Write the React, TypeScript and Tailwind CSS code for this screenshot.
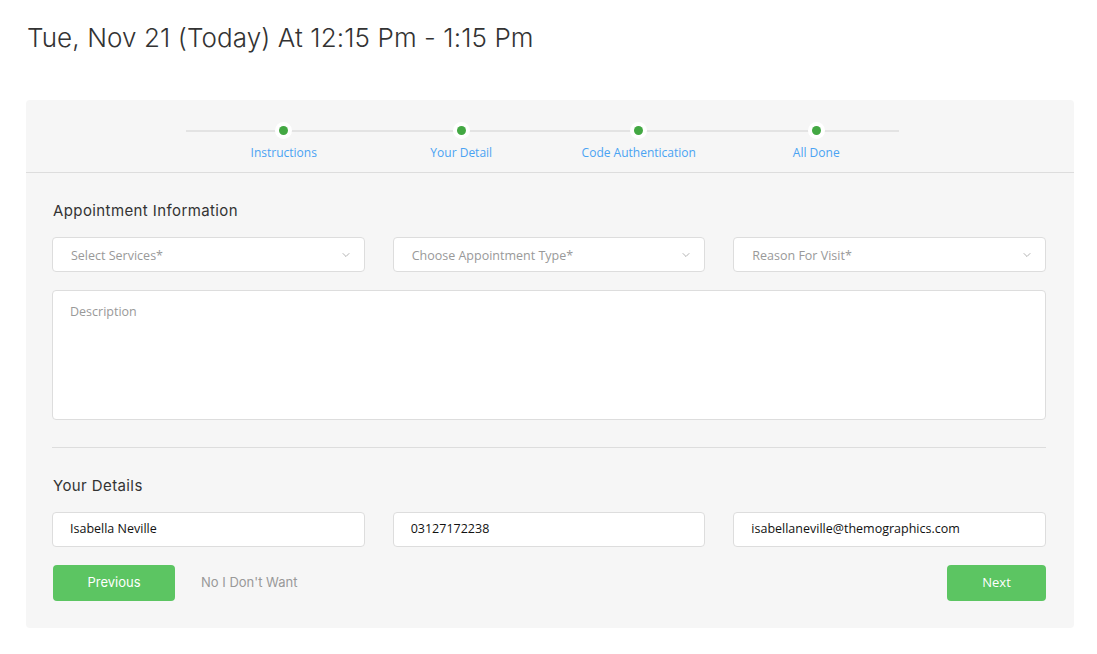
import { ChevronDown } from 'lucide-react';

const steps = ['Instructions', 'Your Detail', 'Code Authentication', 'All Done'];

const selects = ['Select Services*', 'Choose Appointment Type*', 'Reason For Visit*'];

const details = ['Isabella Neville', '03127172238', 'isabellaneville@themographics.com'];

export default function App() {
  return (
    <div className="min-h-[654px] bg-white px-[26px] pt-[22px] font-['Open_Sans',sans-serif]">
      <h1 className="text-[26px] font-light leading-[32px] text-[#333] font-['Inter',sans-serif] tracking-[0.1px] pl-px">
        Tue, Nov 21 (Today) At 12:15 Pm - 1:15 Pm
      </h1>

      <div className="mt-[46px] w-[1048px] rounded-[4px] bg-[#f6f6f6]">
        {/* Stepper */}
        <div className="border-b border-[#dddddd] pt-[22px] pb-[11px]">
          <div className="relative mx-auto flex w-[710px]">
            <div className="absolute left-[-9px] top-[8px] h-[2px] w-[713px] bg-[#e3e3e3]" />
            {steps.map((s) => (
              <div key={s} className="relative flex w-[177.5px] flex-col items-center">
                <div className="flex h-[17px] w-[17px] items-center justify-center rounded-full bg-white">
                  <div className="h-[9px] w-[9px] rounded-full bg-[#43a843]" />
                </div>
                <span className="mt-[6px] text-[12px] leading-[16px] text-[#4aa3f3]">{s}</span>
              </div>
            ))}
          </div>
        </div>

        <div className="pl-[26px] pr-[28px] pt-[28px] pb-[27px]">
          <h2 className="text-[15px] font-normal leading-[20px] text-[#333] font-['Inter',sans-serif] tracking-[0.4px] pl-px">
            Appointment Information
          </h2>

          <div className="mt-[16px] grid grid-cols-3 gap-[28px]">
            {selects.map((s) => (
              <div
                key={s}
                className="flex h-[35px] items-center justify-between rounded-[4px] border border-[#dddddd] bg-white pl-[18px] pr-[12px]"
              >
                <span className="pt-[3px] text-[12.5px] text-[#999]">{s}</span>
                <ChevronDown className="h-[12px] w-[12px] text-[#999]" strokeWidth={1.5} />
              </div>
            ))}
          </div>

          <div className="mt-[18px] h-[130px] rounded-[4px] border border-[#dddddd] bg-white px-[17px] pt-[7px]">
            <span className="text-[12.5px] text-[#999]">Description</span>
          </div>

          <div className="mt-[27px] h-px bg-[#dddddd]" />

          <h2 className="mt-[28px] text-[15px] font-normal leading-[20px] text-[#333] font-['Inter',sans-serif] tracking-[0.4px] pl-px">
            Your Details
          </h2>

          <div className="mt-[16px] grid grid-cols-3 gap-[28px]">
            {details.map((d) => (
              <div
                key={d}
                className="flex h-[35px] items-center rounded-[4px] border border-[#dddddd] bg-white pl-[17px]"
              >
                <span className="text-[12.5px] text-[#111]">{d}</span>
              </div>
            ))}
          </div>

          <div className="mt-[18px] flex items-center">
            <button className="ml-px h-[36px] w-[122px] rounded-[4px] bg-[#5cc562] text-[13px] text-white font-['Inter',sans-serif]">
              Previous
            </button>
            <span className="ml-[26px] text-[13px] text-[#999] font-['Inter',sans-serif]">No I Don't Want</span>
            <button className="ml-auto h-[36px] w-[99px] rounded-[4px] bg-[#5cc562] text-[13px] text-white">
              Next
            </button>
          </div>
        </div>
      </div>
    </div>
  );
}
